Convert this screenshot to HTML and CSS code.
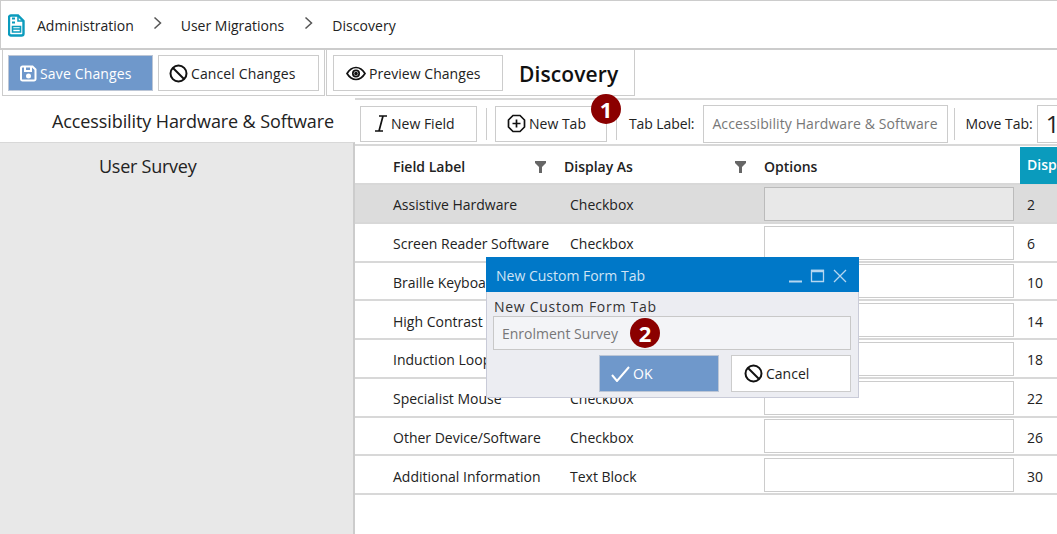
FILE: index.html
```html
<!DOCTYPE html>
<html lang="en">
<head>
<meta charset="utf-8">
<title>Discovery</title>
<link rel="stylesheet" href="styles.css">
</head>
<body>
<div class="page">
  <nav class="crumbs">
    <svg class="logo" width="17" height="23" viewBox="0 0 17 23" fill="none" stroke="#0a9bbd" stroke-width="2.400"><path d="M3 1.500h7l5.500 5.500v12.500a2 2 0 0 1-2 2H3a2 2 0 0 1-2-2v-16a2 2 0 0 1 2-2z"/><path d="M4 4.500h3M4 8.500h3" stroke-width="1.800"/><path d="M4.500 12.500h8v5.500h-8zM4.500 15h8" stroke-width="1.600"/><path d="M10 2v5h5" stroke-width="1.500"/></svg>
    <span class="crumb c1">Administration</span>
    <svg class="chev" width="9" height="14" viewBox="0 0 9 14" fill="none" stroke="#555" stroke-width="1.500"><path d="M1.500 1.500 7.500 7l-6 5.500"/></svg>
    <span class="crumb c2">User Migrations</span>
    <svg class="chev" width="9" height="14" viewBox="0 0 9 14" fill="none" stroke="#555" stroke-width="1.500"><path d="M1.500 1.500 7.500 7l-6 5.500"/></svg>
    <span class="crumb c3">Discovery</span>
  </nav>

  <div class="actions">
    <div class="group g1">
      <button class="btn primary save">
        <svg width="17" height="17" viewBox="0 0 17 17" fill="none" stroke="#fff" stroke-width="2"><path d="M2.500 1.500h10l3 3v9.500a1.500 1.500 0 0 1-1.500 1.500h-11.500a1.500 1.500 0 0 1-1.500-1.500v-11a1.500 1.500 0 0 1 1.500-1.500z"/><path d="M5 2v4h6V2"/><circle cx="8.500" cy="11" r="1.500" fill="#fff"/></svg>
        <span>Save Changes</span>
      </button>
      <button class="btn cancel-changes">
        <svg width="19" height="19" viewBox="0 0 19 19" fill="none" stroke="#111" stroke-width="2"><circle cx="9.500" cy="9.500" r="8"/><path d="M4 4l11 11"/></svg>
        <span>Cancel Changes</span>
      </button>
    </div>
    <div class="group g2">
      <button class="btn preview">
        <svg width="20" height="15" viewBox="0 0 20 15" fill="none" stroke="#111" stroke-width="1.700"><path d="M1 7.500C3.500 3.500 6.500 1.500 10 1.500s6.500 2 9 6c-2.500 4-5.500 6-9 6s-6.500-2-9-6z"/><circle cx="10" cy="7.500" r="3.200"/><circle cx="10" cy="7.500" r="1" fill="#111"/></svg>
        <span>Preview Changes</span>
      </button>
      <h1 class="title">Discovery</h1>
    </div>
  </div>

  <div class="main">
    <aside class="side">
      <div class="tab active">Accessibility Hardware &amp; Software</div>
      <div class="tab-list"><div class="tab">User Survey</div></div>
    </aside>

    <section class="content">
      <div class="tools">
        <button class="btn new-field">
          <svg width="14" height="17" viewBox="0 0 14 17" fill="none" stroke="#111" stroke-width="1.700"><path d="M5 1h8M1 16h8M9 1 5 16"/></svg>
          <span>New Field</span>
        </button>
        <i class="sep s1"></i>
        <button class="btn new-tab">
          <svg width="19" height="19" viewBox="0 0 19 19" fill="none" stroke="#111" stroke-width="1.700"><path d="M6 1.500h7l4.500 4.500v7L13 17.500H6L1.500 13V6z"/><path d="M9.500 5.500v8M5.500 9.500h8"/></svg>
          <span>New Tab</span>
        </button>
        <i class="sep s2"></i>
        <span class="tool-label">Tab Label:</span>
        <div class="field tab-label">Accessibility Hardware &amp; Software</div>
        <i class="sep s3"></i>
        <span class="tool-label move">Move Tab:</span>
        <div class="field move-val">1</div>
      </div>

      <div class="row head">
        <div class="cell label">Field Label</div>
        <svg class="filter f1" width="11" height="12" viewBox="0 0 11 12"><path d="M0 0h11v2L7 6v6H4V6L0 2z" fill="#666"/></svg>
        <div class="cell display">Display As</div>
        <svg class="filter f2" width="11" height="12" viewBox="0 0 11 12"><path d="M0 0h11v2L7 6v6H4V6L0 2z" fill="#666"/></svg>
        <div class="cell options">Options</div>
        <div class="cell disp">Disp</div>
      </div>

      <div class="row selected"><div class="cell label">Assistive Hardware</div><div class="cell display">Checkbox</div><div class="opt"></div><div class="cell order">2</div></div>
      <div class="row"><div class="cell label">Screen Reader Software</div><div class="cell display">Checkbox</div><div class="opt"></div><div class="cell order">6</div></div>
      <div class="row"><div class="cell label">Braille Keyboard</div><div class="opt"></div><div class="cell order">10</div></div>
      <div class="row"><div class="cell label">High Contrast</div><div class="opt"></div><div class="cell order">14</div></div>
      <div class="row"><div class="cell label">Induction Loop</div><div class="opt"></div><div class="cell order">18</div></div>
      <div class="row"><div class="cell label">Specialist Mouse</div><div class="cell display">Checkbox</div><div class="opt"></div><div class="cell order">22</div></div>
      <div class="row"><div class="cell label">Other Device/Software</div><div class="cell display">Checkbox</div><div class="opt"></div><div class="cell order">26</div></div>
      <div class="row"><div class="cell label">Additional Information</div><div class="cell display">Text Block</div><div class="opt"></div><div class="cell order">30</div></div>
    </section>
  </div>

  <div class="dialog">
    <header class="dlg-title">
      <span class="dlg-name">New Custom Form Tab</span>
      <svg class="dlg-ctl" width="58" height="14" viewBox="0 0 58 14" fill="none" stroke="#b5d6f0"><path d="M0 12.500h13" stroke-width="2"/><path d="M22.500 1.500h12v11h-12z" stroke-width="1.300"/><path d="M22 2h13" stroke-width="2.500"/><path d="M45 1l12 12M57 1 45 13" stroke-width="1.300"/></svg>
    </header>
    <div class="dlg-body">
      <div class="dlg-label">New Custom Form Tab</div>
      <div class="dlg-input">Enrolment Survey</div>
      <div class="dlg-btns">
        <button class="btn primary ok">
          <svg width="19" height="16" viewBox="0 0 19 16" fill="none" stroke="#fff" stroke-width="2"><path d="M1 9l5 6L18 1"/></svg>
          <span>OK</span>
        </button>
        <button class="btn dlg-cancel">
          <svg width="19" height="19" viewBox="0 0 19 19" fill="none" stroke="#111" stroke-width="2"><circle cx="9.500" cy="9.500" r="8"/><path d="M4 4l11 11"/></svg>
          <span>Cancel</span>
        </button>
      </div>
    </div>
  </div>

  <div class="badge b1">1</div>
  <div class="badge b2">2</div>
</div>
</body>
</html>
```
FILE: styles.css
```css
* { box-sizing: border-box; }
html, body { margin: 0; padding: 0; background: #fff; }
body { font-family: "Open Sans", "Noto Sans", sans-serif; color: #222; font-size: 14px; }
.page { position: relative; width: 1057px; height: 534px; overflow: hidden; }

.crumbs { height: 50px; display: flex; align-items: center; border: 1px solid #ccc; border-width: 1px 0 2px 1px; padding: 1px 0 0 7px; }
.logo { margin-right: 12px; }
.crumb { font-size: 14px; }
.chev { margin: -4px 0 0; }
.c1 { margin-right: 19px; }
.c2 { margin: 0 20px 0 19px; }
.c3 { margin-left: 19px; letter-spacing: 0.05px; }

.actions { display: flex; height: 48px; padding-left: 2px; }
.group { display: flex; align-items: flex-start; border: 1px solid #ccc; border-top: 0; padding-top: 5px; }
.g1 { width: 323px; height: 46px; padding-left: 5px; gap: 5px; }
.g2 { width: 309px; height: 47px; margin-left: 1px; padding-left: 6px; border-top: 1px solid #ccc; margin-top: -1px; }

.btn { display: flex; flex: none; align-items: center; justify-content: flex-start; gap: 3px; height: 36px; background: #fff; border: 1px solid #ccc; font: inherit; font-size: 14px; color: #222; padding: 0 0 0 12px; white-space: nowrap; }
.btn.primary { background: #6f98cb; color: #fff; border-color: #bcc6d6; }
.btn svg { flex: none; }
.save { width: 145px; padding-left: 11px; letter-spacing: 0.15px; }
.cancel-changes { width: 161px; padding-left: 10px; letter-spacing: 0.12px; }
.preview { width: 170px; letter-spacing: 0.05px; }
.title { margin: 1px 0 0 16px; font-size: 21px; font-weight: 600; color: #111; line-height: 36px; letter-spacing: 0.1px; }

.main { display: flex; height: 436px; }
.side { width: 355px; flex: none; display: flex; flex-direction: column; }
.tab { font-size: 18px; letter-spacing: -0.1px; color: #222; }
.tab.active { height: 44px; margin-left: 1px; padding: 11px 0 0 51px; line-height: 25px; white-space: nowrap; }
.tab-list { flex: 1; background: #e8e8e8; border-top: 1px solid #d8d8d8; border-right: 2px solid #ccc; padding: 11px 0 0 99px; }
.tab-list .tab { line-height: 25px; letter-spacing: -0.25px; }

.content { flex: 1; min-width: 0; }
.tools { display: flex; align-items: center; height: 48px; padding: 3px 0 0 5px; border-top: 2px solid #d8d8d8; border-bottom: 2px solid #d8d8d8; }
.new-field { width: 117px; padding-left: 13px; }
.new-tab { width: 112px; padding-left: 11px; gap: 3px; }
.sep { display: block; width: 1px; height: 32px; background: #ccc; flex: none; }
.s1 { margin: 0 8px 0 9px; }
.s2 { margin: 0 12px 0 9px; }
.s3 { margin: 0 10px 0 6px; }
.tool-label { flex: none; font-size: 14px; font-weight: 500; white-space: nowrap; margin-right: 9px; letter-spacing: -0.1px; }
.tool-label.move { font-weight: 400; margin-right: 4px; letter-spacing: 0; }
.field { height: 38px; border: 1px solid #ccc; display: flex; align-items: center; flex: none; }
.tab-label { width: 245px; padding-left: 8px; color: #777; font-size: 14px; letter-spacing: 0.1px; white-space: nowrap; }
.move-val { width: 40px; padding-left: 8px; font-size: 24px; color: #222; }

.row { position: relative; display: grid; grid-template-columns: 38px 177px 194px 263px 1fr; align-items: center; height: 38.75px; padding-top: 3px; border-bottom: 2px solid #d8d8d8; }
.row > .label { grid-column: 2; }
.row > .display { grid-column: 3; }
.row > .opt, .row > .options { grid-column: 4; }
.row > .order, .row > .disp { grid-column: 5; }
.cell { font-size: 14px; white-space: nowrap; }
.head { height: 39px; }
.head .cell { font-weight: 600; color: #222; }
.head .display { margin-left: -6px; }
.head .disp { align-self: stretch; margin: -2px 0 0 -7px; padding: 8px 0 0 7px; background: #0a9bbd; color: #fff; height: 37px; overflow: hidden; }
.filter { position: absolute; top: 15px; }
.f1 { left: 180px; }
.f2 { left: 380px; }
.selected { background: #dcdcdc; }
.opt { width: 250px; height: 34px; margin-top: -2px; background: #fff; border: 1px solid #ccc; }
.selected .opt { background: #e8e8e8; border-color: #bbb; }

.dialog { position: absolute; left: 486px; top: 257px; width: 373px; height: 141px; border: 1px solid #c9cbd8; border-top: 0; background: #ecedf2; }
.dlg-title { display: flex; align-items: center; justify-content: space-between; height: 35px; background: #0078c8; margin: 0 -1px; padding: 0 12px 0 10px; }
.dlg-name { color: #cfe4f5; font-size: 14px; margin-top: 1px; }
.dlg-ctl { margin-top: 2px; }
.dlg-body { padding: 5px 7px 0 6px; }
.dlg-label { font-size: 14px; line-height: 19px; letter-spacing: 0.72px; color: #333; height: 19px; margin-left: 1px; }
.dlg-input { height: 34px; background: #f3f4f7; border: 1px solid #c8c8c8; color: #777; padding-left: 8px; display: flex; align-items: center; font-size: 14px; }
.dlg-btns { display: flex; justify-content: flex-end; gap: 12px; margin-top: 5px; }
.ok, .dlg-cancel { width: 120px; height: 37px; }
.ok { padding-left: 11px; }

.badge { position: absolute; width: 30px; height: 30px; border-radius: 50%; background: #8b0000; color: #fff; font-weight: 700; font-size: 22px; line-height: 30px; text-align: center; }
.b1 { left: 591px; top: 94px; }
.b2 { left: 630px; top: 318px; }
```
